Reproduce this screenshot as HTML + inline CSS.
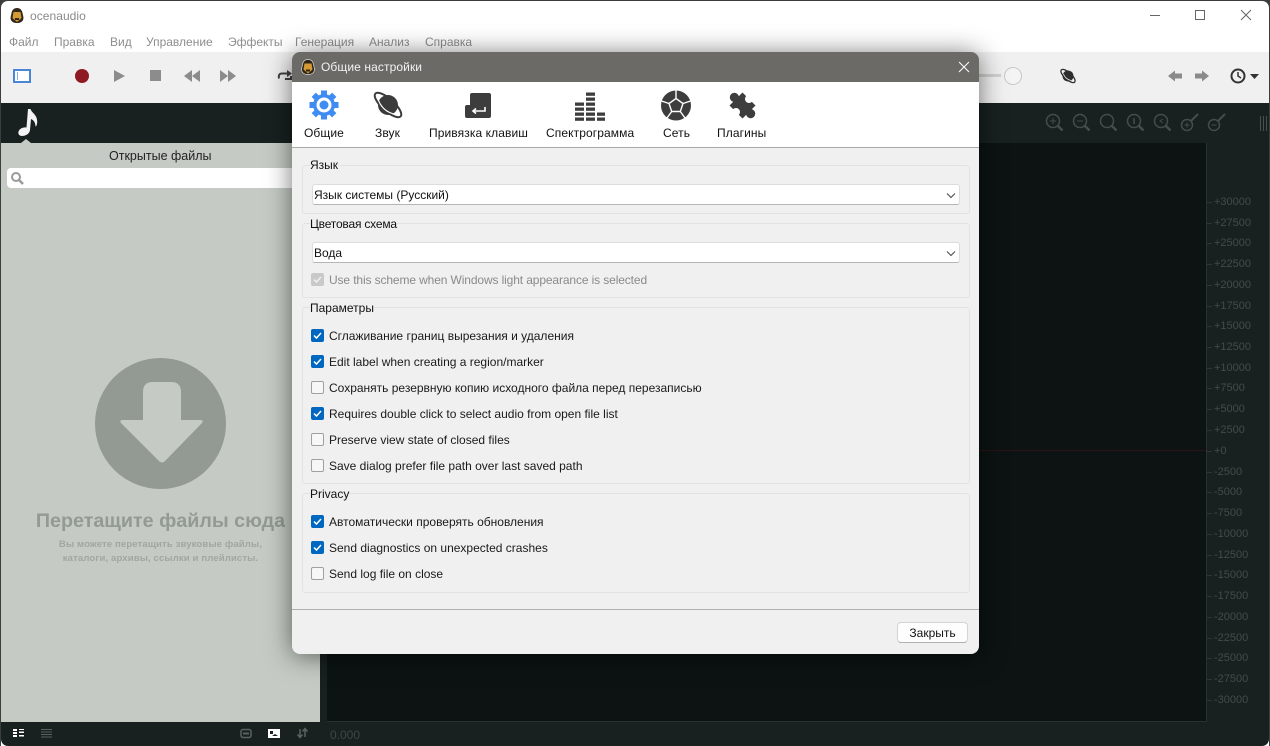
<!DOCTYPE html>
<html><head><meta charset="utf-8"><style>
*{box-sizing:border-box}
html,body{margin:0;padding:0;width:1270px;height:746px;overflow:hidden;background:#3a3f3e}
body{font-family:"Liberation Sans",sans-serif;font-size:12px;color:#111}
.a{position:absolute}
.t{position:absolute;white-space:nowrap;line-height:16px}
.m{color:#8d8d8d;top:34px;font-size:12px}
.ax{position:absolute;left:1207px;width:45px;color:#434b4a;font-size:11px;line-height:14px;white-space:nowrap}
.ax i{position:absolute;left:0;top:7px;width:5px;height:1px;background:#2e3634}
.ax span{position:absolute;left:7px}
.g{position:absolute;left:10px;width:668px;border:1px solid #e2e2e2;border-radius:3px}
.gl{position:absolute;left:18px;background:#f0f0f0;padding:0;line-height:16px;height:16px;white-space:nowrap;font-size:12px;color:#111}
.cb{position:absolute;left:19px;width:13px;height:13px;margin-top:1px;border-radius:2px;background:#f7f7f7;border:1px solid #a0a0a0}
.cb.on{background:#0067c0;border-color:#0067c0}
.cb.dis{background:#c9c9c9;border-color:#c9c9c9}
.cb svg{position:absolute;left:0;top:0}
.l{position:absolute;left:37px;white-space:nowrap;line-height:16px;font-size:12px;color:#1a1a1a}
.combo{position:absolute;left:20px;width:648px;height:21px;background:#fff;border:1px solid #dcdcdc;border-bottom-color:#b5b5b5;border-radius:3px;line-height:20px;padding-left:1px;font-size:12px;color:#111}
.tab{position:absolute;top:73px;text-align:center;white-space:nowrap;font-size:12px;line-height:16px;color:#111;letter-spacing:.1px}
</style></head><body>
<!-- window -->
<div class="a" style="left:1px;top:1px;width:1268px;height:745px;background:#fff;border-radius:7px 7px 0 0;overflow:hidden">
 <div class="a" style="left:0;top:51px;width:1268px;height:51px;background:#f0f0f0"></div>
 <div class="a" style="left:0;top:102px;width:1268px;height:643px;background:#182020;border-radius:0 0 7px 7px"></div>
</div>
<svg class="a" style="left:9px;top:7px" width="16" height="17" viewBox="0 0 16 17"><path d="M8 1c3 0 5 2 5.500 5 .6 3 1.500 5 .5 7-1 2-3 3-6 3s-5-1-6-3c-1-2 0-4 .5-7C3 3 5 1 8 1z" fill="#33291a"/><path d="M4.500 5h7l1 6-4.500 4-4.500-4z" fill="#d49a35"/><path d="M6 11h4v2H6z" fill="#33291a"/></svg>
<div class="t" style="left:30px;top:8px;color:#8a8a8a;font-size:12px;letter-spacing:.05px">ocenaudio</div>
<div class="t m" style="left:9px">Файл</div>
<div class="t m" style="left:54px">Правка</div>
<div class="t m" style="left:110px">Вид</div>
<div class="t m" style="left:146px">Управление</div>
<div class="t m" style="left:228px">Эффекты</div>
<div class="t m" style="left:295px">Генерация</div>
<div class="t m" style="left:369px">Анализ</div>
<div class="t m" style="left:425px">Справка</div>
<!-- window controls -->
<svg class="a" style="left:1140px;top:4px" width="125" height="24" fill="none" stroke="#666" stroke-width="1"><path d="M10 11.500h10"/><rect x="55.500" y="6.500" width="9" height="9"/><path d="M101 6l10 10M111 6l-10 10"/></svg>
<!-- toolbar -->
<svg class="a" style="left:0;top:52px" width="300" height="50">
 <rect x="14" y="18" width="16" height="12" fill="#fff" stroke="#4a86d8" stroke-width="2"/><rect x="17" y="20" width="1" height="8" fill="#8ab0e8"/>
 <circle cx="82" cy="24" r="7" fill="#8e1b22"/>
 <path d="M114 18l11 6-11 6z" fill="#8c8c8c"/>
 <rect x="150" y="18" width="11" height="11" fill="#8c8c8c"/>
 <path d="M184 24l8-6v12zM192 24l8-6v12z" fill="#8c8c8c"/>
 <path d="M220 18l8 6-8 6zM228 18l8 6-8 6z" fill="#8c8c8c"/>
 <path d="M279 26.500q-1-5 3-5h6" stroke="#444" stroke-width="2" fill="none"/><path d="M287 18l5 3.500-5 3.500z" fill="#444"/>
 <path d="M291 24v3h-6" stroke="#444" stroke-width="2" fill="none"/>
</svg>
<!-- right toolbar -->
<svg class="a" style="left:975px;top:52px" width="295" height="50">
 <rect x="4" y="22" width="22" height="3" fill="#d0d0d0"/>
 <circle cx="38" cy="24" r="8.500" fill="#f4f4f4" stroke="#c8c8c8"/>
 <g transform="translate(93,24) rotate(42)"><ellipse cx="0" cy="0" rx="9" ry="3.500" fill="none" stroke="#2e2e2e" stroke-width="1.300"/><circle cx="0" cy="0" r="5.500" fill="#2e2e2e"/><path d="M-5 1.500q5 2.500 10 0" stroke="#f0f0f0" stroke-width=".8" fill="none"/></g>
 <path d="M193 24l7-5.500v3h7v5h-7v3z" fill="#8a8a8a"/><path d="M220 21.500h7v-3l7 5.500-7 5.500v-3h-7z" fill="#8a8a8a"/>
 <circle cx="263" cy="24" r="6.500" fill="none" stroke="#333" stroke-width="2"/><path d="M263 20v4l3 2" stroke="#333" stroke-width="1.500" fill="none"/>
 <path d="M275 22h9l-4.500 5z" fill="#333"/>
</svg>
<!-- zoom icons -->
<svg class="a" style="left:1040px;top:110px" width="220" height="26" fill="none" stroke="#454d4c" stroke-width="1.500">
 <g><circle cx="13" cy="11" r="6.500"/><path d="M17.500 15.500l5 5" stroke-width="2.500"/><path d="M10 11h6M13 8v6" stroke-width="1"/></g>
 <g transform="translate(27,0)"><circle cx="13" cy="11" r="6.500"/><path d="M17.500 15.500l5 5" stroke-width="2.500"/><path d="M10 11h6" stroke-width="1"/></g>
 <g transform="translate(54,0)"><circle cx="13" cy="11" r="6.500"/><path d="M17.500 15.500l5 5" stroke-width="2.500"/></g>
 <g transform="translate(81,0)"><circle cx="13" cy="11" r="6.500"/><path d="M17.500 15.500l5 5" stroke-width="2.500"/><path d="M13 8v6" stroke-width="1.500"/></g>
 <g transform="translate(108,0)"><circle cx="13" cy="11" r="6.500"/><path d="M17.500 15.500l5 5" stroke-width="2.500"/><path d="M15 9l-3 2 3 2" stroke-width="1"/></g>
 <circle cx="147" cy="15" r="5.500"/><path d="M151 11l7-7" stroke-width="2"/><path d="M144.500 15h5M147 12.500v5" stroke-width="1"/>
 <circle cx="174" cy="15" r="5.500"/><path d="M178 11l7-7" stroke-width="2"/><path d="M171.500 15h5" stroke-width="1"/>
</svg>
<div class="a" style="left:1260px;top:116px;width:7px;height:15px;border-left:1px solid #485250;border-right:1px solid #485250"><div style="width:1px;height:15px;background:#485250;margin-left:2px"></div></div>
<!-- note -->
<svg class="a" style="left:10px;top:106px" width="30" height="34"><path d="M18 3h2.500c1 4 8 6 6.500 15-.4 1.500-1 2.500-1.500 2.500 0-4-2-6.500-4.500-7.500l-1 11c-.5 4-4.500 6-8 6-3.500 0-4.500-3-3-5.500s5-3.500 7.500-3z" fill="#f3f3f3"/></svg>
<div class="a" style="left:21px;top:139px;width:0;height:0;border-left:5px solid transparent;border-right:5px solid transparent;border-bottom:4px solid #c5cbc4"></div>
<!-- left panel -->
<div class="a" style="left:1px;top:143px;width:319px;height:579px;background:#c5cbc4"></div>
<div class="t" style="left:109px;top:148px;color:#222;font-size:12.500px">Открытые файлы</div>
<div class="a" style="left:7px;top:168px;width:300px;height:20px;background:#fff;border-radius:4px"></div>
<svg class="a" style="left:9px;top:171px" width="16" height="16" fill="none" stroke="#9a9a9a"><circle cx="7" cy="6" r="4" stroke-width="2"/><path d="M10 9l4 4" stroke-width="2.500"/></svg>
<svg class="a" style="left:95px;top:358px" width="132" height="132"><circle cx="65.500" cy="65.500" r="65.500" fill="#939a94"/><path d="M48 62V34q0-10 10-10h18q10 0 10 10v28h19q4 0 2 3L70 103q-3 3-6 0L26 65q-2-3 2-3z" fill="#c5cbc4"/></svg>
<div class="t" style="left:0;top:510px;width:321px;text-align:center;font-weight:bold;font-size:19.700px;line-height:22px;color:#939a94">Перетащите файлы сюда</div>
<div class="t" style="left:0;top:538px;width:321px;text-align:center;font-weight:bold;font-size:9.600px;line-height:14px;color:#a0a7a1;letter-spacing:.1px">Вы можете перетащить звуковые файлы,<br>каталоги, архивы, ссылки и плейлисты.</div>
<!-- wave area -->
<div class="a" style="left:327px;top:143px;width:880px;height:579px;background:#0c1312;border:0;border-right:1px solid #2a3230;border-bottom:1px solid #2a3230"></div>
<div class="a" style="left:327px;top:450px;width:879px;height:1px;background:#2a1414"></div>
<div class="ax" style="top:195px"><i></i><span>+30000</span></div>
<div class="ax" style="top:216px"><i></i><span>+27500</span></div>
<div class="ax" style="top:236px"><i></i><span>+25000</span></div>
<div class="ax" style="top:257px"><i></i><span>+22500</span></div>
<div class="ax" style="top:278px"><i></i><span>+20000</span></div>
<div class="ax" style="top:299px"><i></i><span>+17500</span></div>
<div class="ax" style="top:319px"><i></i><span>+15000</span></div>
<div class="ax" style="top:340px"><i></i><span>+12500</span></div>
<div class="ax" style="top:361px"><i></i><span>+10000</span></div>
<div class="ax" style="top:381px"><i></i><span>+7500</span></div>
<div class="ax" style="top:402px"><i></i><span>+5000</span></div>
<div class="ax" style="top:423px"><i></i><span>+2500</span></div>
<div class="ax" style="top:444px"><i></i><span>+0</span></div>
<div class="ax" style="top:465px"><i></i><span>-2500</span></div>
<div class="ax" style="top:485px"><i></i><span>-5000</span></div>
<div class="ax" style="top:506px"><i></i><span>-7500</span></div>
<div class="ax" style="top:527px"><i></i><span>-10000</span></div>
<div class="ax" style="top:548px"><i></i><span>-12500</span></div>
<div class="ax" style="top:568px"><i></i><span>-15000</span></div>
<div class="ax" style="top:589px"><i></i><span>-17500</span></div>
<div class="ax" style="top:610px"><i></i><span>-20000</span></div>
<div class="ax" style="top:631px"><i></i><span>-22500</span></div>
<div class="ax" style="top:651px"><i></i><span>-25000</span></div>
<div class="ax" style="top:672px"><i></i><span>-27500</span></div>
<div class="ax" style="top:693px"><i></i><span>-30000</span></div>
<div class="t" style="left:330px;top:727px;color:#3f4746;font-size:12px">0.000</div>
<!-- bottom icons -->
<svg class="a" style="left:10px;top:726px" width="300" height="16">
 <path d="M3 3h4v2H3zM9 3h5v1H9zM3 6h4v2H3zM9 6h5v1H9zM9 5h5v.5H9zM3 9h4v2H3zM9 9h5v1H9zM9 10.500h5v.5H9z" fill="#fff"/>
 <path d="M31 3h11v1H31zM31 5.500h11v1H31zM31 8h11v1H31zM31 10.500h11v1H31z" fill="#5a6260"/>
 <rect x="231" y="3.500" width="10" height="8" rx="2" fill="none" stroke="#5a6260" stroke-width="1.500"/><path d="M233 7.500h6" stroke="#5a6260" stroke-width="2"/>
 <rect x="258" y="3" width="12" height="9" fill="#fff"/><path d="M260 5h3v3h-3zM262 10l3-2 3 2z" fill="#182020"/>
 <path d="M290 3v8M287.500 8.500l2.500 3 2.500-3M295 11V3M292.500 5.500l2.500-3 2.500 3" stroke="#5a6260" stroke-width="1.500" fill="none"/>
</svg>
<!-- dialog -->
<div class="a" style="left:292px;top:52px;width:687px;height:602px;background:#f0f0f0;border-radius:8px;overflow:hidden;box-shadow:0 2px 26px rgba(0,0,0,.55)">
 <div class="a" style="left:0;top:0;width:687px;height:30px;background:#6b6a66"></div>
 <svg class="a" style="left:8px;top:6px" width="16" height="18" viewBox="0 0 16 17"><path d="M8 1c3 0 5 2 5.500 5 .6 3 1.500 5 .5 7-1 2-3 3-6 3s-5-1-6-3c-1-2 0-4 .5-7C3 3 5 1 8 1z" fill="#2d2416" stroke="#ddd" stroke-width=".7"/><path d="M4.500 5h7l1 6-4.500 4-4.500-4z" fill="#d49a35"/><path d="M6 11h4v2H6z" fill="#2d2416"/></svg>
 <div class="t" style="left:29px;top:7px;color:#f2f2f2;font-size:12px;letter-spacing:.1px">Общие настройки</div>
 <svg class="a" style="left:665px;top:8px" width="14" height="14" stroke="#fff" fill="none"><path d="M2 2l10 10M12 2L2 12"/></svg>
 <div class="a" style="left:0;top:30px;width:687px;height:65px;background:#fff"></div>
 <div class="a" style="left:0;top:95px;width:687px;height:1px;background:#a8a8a8"></div>
 <!-- tab icons -->
 <svg class="a" style="left:16px;top:38px" width="32" height="32" viewBox="0 0 32 32"><g fill="#3f8cf2"><circle cx="16" cy="15" r="11"/><g><rect x="13" y="0.500" width="6" height="29"/><rect x="13" y="0.500" width="6" height="29" transform="rotate(45 16 15)"/><rect x="13" y="0.500" width="6" height="29" transform="rotate(90 16 15)"/><rect x="13" y="0.500" width="6" height="29" transform="rotate(135 16 15)"/></g></g><circle cx="16" cy="15" r="7.500" fill="#fff"/><circle cx="16" cy="15" r="4.500" fill="#3f8cf2"/></svg>
 <svg class="a" style="left:80px;top:38px" width="32" height="32" viewBox="0 0 32 32"><g transform="translate(16,15) rotate(42)"><ellipse cx="0" cy="0" rx="17" ry="6" fill="none" stroke="#3b3b3b" stroke-width="2"/><circle cx="0" cy="0" r="10" fill="#3b3b3b"/><path d="M-10 3q10 5 20 0" stroke="#fff" stroke-width="1.200" fill="none"/></g></svg>
 <svg class="a" style="left:171px;top:38px" width="32" height="32" viewBox="0 0 32 32"><path d="M7 5q0-2 2-2h17q2 0 2 2v21q0 2-2 2H4q-2 0-2-2v-9q0-2 2-2h3z" fill="#3d3d3d"/><path d="M22 17v4H10M13 18.500l-3 2.500 3 2.500" stroke="#fff" stroke-width="1.600" fill="none"/></svg>
 <svg class="a" style="left:283px;top:38px" width="32" height="32" viewBox="0 0 32 32" fill="#3d3d3d">
  <rect x="11" y="2.500" width="9" height="3.300"/><rect x="11" y="7.500" width="9" height="3.300"/><rect x="11" y="12.500" width="9" height="3.300"/><rect x="11" y="17.500" width="9" height="3.300"/><rect x="11" y="22.500" width="9" height="3.300"/><rect x="11" y="27.500" width="9" height="3.300"/>
  <rect x="0" y="12.500" width="9" height="3.300"/><rect x="0" y="17.500" width="9" height="3.300"/><rect x="0" y="22.500" width="9" height="3.300"/><rect x="0" y="27.500" width="9" height="3.300"/>
  <rect x="22" y="22.500" width="8" height="3.300"/><rect x="22" y="27.500" width="8" height="3.300"/>
 </svg>
 <svg class="a" style="left:368px;top:38px" width="32" height="32" viewBox="0 0 32 32"><circle cx="16" cy="15.500" r="15" fill="#3d3d3d"/><path d="M16 8.500l7 5-2.700 8h-8.600L9 13.500zM16 8.500V.5M23 13.500l7.500-2.500M20.300 21.500l4.700 6.500M11.700 21.500l-4.700 6.500M9 13.500l-7.500-2.500" stroke="#fff" stroke-width="1.400" fill="#3d3d3d"/></svg>
 <svg class="a" style="left:435px;top:38px" width="32" height="32" viewBox="0 0 32 32"><g transform="translate(15.500,15.500) rotate(-45) scale(1.150)"><rect x="-8" y="-8" width="16" height="16" fill="#3d3d3d"/><circle cx="0" cy="-10" r="4" fill="#3d3d3d"/><circle cx="0" cy="10" r="4" fill="#3d3d3d"/><circle cx="-8" cy="0" r="3.500" fill="#fff"/><circle cx="8" cy="0" r="3.500" fill="#fff"/></g></svg>
 <div class="tab" style="left:12px">Общие</div>
 <div class="tab" style="left:83px">Звук</div>
 <div class="tab" style="left:137px">Привязка клавиш</div>
 <div class="tab" style="left:254px">Спектрограмма</div>
 <div class="tab" style="left:371px">Сеть</div>
 <div class="tab" style="left:425px">Плагины</div>
 <!-- groups -->
 <div class="g" style="top:113px;height:49px"></div>
 <div class="gl" style="top:105px">Язык</div>
 <div class="combo" style="top:132px">Язык системы (Русский)<svg class="a" style="right:2px;top:7px" width="12" height="8" fill="none" stroke="#444"><path d="M2 1.500L6 5.500l4-4"/></svg></div>
 <div class="g" style="top:171px;height:75px"></div>
 <div class="gl" style="top:164px;letter-spacing:-.2px">Цветовая схема</div>
 <div class="combo" style="top:190px">Вода<svg class="a" style="right:2px;top:7px" width="12" height="8" fill="none" stroke="#444"><path d="M2 1.500L6 5.500l4-4"/></svg></div>
 <div class="cb dis" style="top:220px"><svg width="11" height="11" fill="none" stroke="#f0f0f0" stroke-width="1.500"><path d="M2 5.500l2.500 2.500L9 3"/></svg></div>
 <div class="l" style="top:220px;color:#8a8a8a;letter-spacing:-.12px">Use this scheme when Windows light appearance is selected</div>
 <div class="g" style="top:255px;height:177px"></div>
 <div class="gl" style="top:248px">Параметры</div>
 <div class="cb on" style="top:276px"><svg width="11" height="11" fill="none" stroke="#fff" stroke-width="1.500"><path d="M2 5.500l2.500 2.500L9 3"/></svg></div>
 <div class="l" style="top:276px">Сглаживание границ вырезания и удаления</div>
 <div class="cb on" style="top:302px"><svg width="11" height="11" fill="none" stroke="#fff" stroke-width="1.500"><path d="M2 5.500l2.500 2.500L9 3"/></svg></div>
 <div class="l" style="top:302px">Edit label when creating a region/marker</div>
 <div class="cb" style="top:328px"></div>
 <div class="l" style="top:328px">Сохранять резервную копию исходного файла перед перезаписью</div>
 <div class="cb on" style="top:354px"><svg width="11" height="11" fill="none" stroke="#fff" stroke-width="1.500"><path d="M2 5.500l2.500 2.500L9 3"/></svg></div>
 <div class="l" style="top:354px">Requires double click to select audio from open file list</div>
 <div class="cb" style="top:380px"></div>
 <div class="l" style="top:380px">Preserve view state of closed files</div>
 <div class="cb" style="top:406px"></div>
 <div class="l" style="top:406px">Save dialog prefer file path over last saved path</div>
 <div class="g" style="top:441px;height:100px"></div>
 <div class="gl" style="top:434px">Privacy</div>
 <div class="cb on" style="top:462px"><svg width="11" height="11" fill="none" stroke="#fff" stroke-width="1.500"><path d="M2 5.500l2.500 2.500L9 3"/></svg></div>
 <div class="l" style="top:462px">Автоматически проверять обновления</div>
 <div class="cb on" style="top:488px"><svg width="11" height="11" fill="none" stroke="#fff" stroke-width="1.500"><path d="M2 5.500l2.500 2.500L9 3"/></svg></div>
 <div class="l" style="top:488px">Send diagnostics on unexpected crashes</div>
 <div class="cb" style="top:514px"></div>
 <div class="l" style="top:514px">Send log file on close</div>
 <div class="a" style="left:0;top:557px;width:687px;height:1px;background:#b0b0b0"></div>
 <div class="a" style="left:605px;top:570px;width:71px;height:21px;background:#fdfdfd;border:1px solid #d4d4d4;border-bottom-color:#b0b0b0;border-radius:4px;text-align:center;line-height:20px;font-size:12px">Закрыть</div>
</div>
</body></html>
